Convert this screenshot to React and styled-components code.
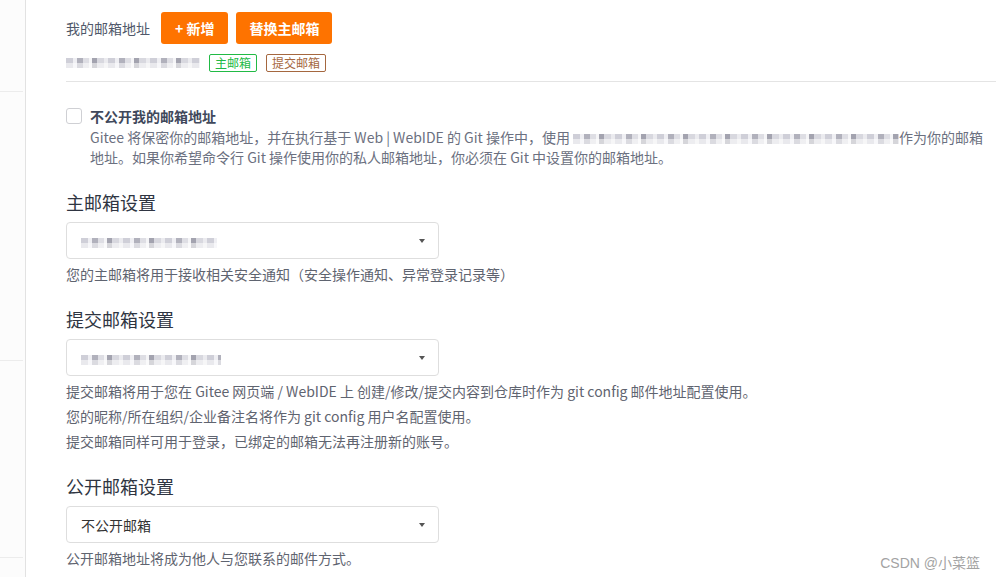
import React from "react";
import styled, { createGlobalStyle } from "styled-components";

const GlobalStyle = createGlobalStyle`
  html, body {
    margin: 0;
    padding: 0;
    background: #fff;
  }
  body {
    font-family: "Noto Sans CJK SC", "Noto Sans", sans-serif;
    color: #40485b;
  }
  * {
    box-sizing: border-box;
  }
`;

const Page = styled.div`
  position: relative;
  display: flex;
  width: 996px;
  height: 577px;
  overflow: hidden;
`;

const Sidebar = styled.aside`
  flex: 0 0 26px;
  background: #fcfcfc;
  border-right: 1px solid #e2e2e2;
`;

const SideItem = styled.div`
  height: ${(p) => p.h}px;
  margin-right: 2px;
  border-bottom: 1px solid #ececec;
`;

const Main = styled.main`
  flex: 1;
  min-width: 0;
  padding: 12px 0 0 40px;
`;

const AddressRow = styled.div`
  display: flex;
  align-items: center;
  gap: 8px;
  height: 32px;
`;

const FieldLabel = styled.span`
  margin-right: 3px;
  font-size: 14px;
  color: #50586a;
`;

const OrangeButton = styled.button`
  height: 32px;
  padding: 0 ${(p) => (p.wide ? 14 : 13)}px;
  border: none;
  border-radius: 3px;
  background: #fe7300;
  color: #fff;
  font-family: inherit;
  font-size: 14px;
  font-weight: 700;
  line-height: 32px;
`;

const EmailRow = styled.div`
  display: flex;
  align-items: center;
  gap: 9px;
  height: 18px;
  margin-top: 10px;
`;

/* pixelated stand-in for the blurred e-mail addresses */
const Masked = styled.span`
  display: inline-block;
  width: ${(p) => p.w}px;
  height: 10px;
  vertical-align: middle;
  background:
    repeating-linear-gradient(
      180deg,
      rgba(255, 255, 255, 0) 0 5px,
      rgba(255, 255, 255, 0.55) 5px 10px
    ),
    repeating-linear-gradient(
      90deg,
      #c4c4cf 0 7px,
      #ececf1 7px 11px,
      #9e9eac 11px 17px,
      #d6d6de 17px 23px,
      #f3f3f6 23px 26px,
      #8d8d9c 26px 31px,
      #cfcfd8 31px 38px,
      #e7e7ec 38px 42px
    );
  filter: blur(0.6px);
  opacity: 0.8;
`;

const Tag = styled.span`
  height: 18px;
  padding: 0 5px;
  border: 1px solid ${(p) => p.color};
  border-radius: 2px;
  color: ${(p) => p.color};
  font-size: 12px;
  line-height: 16px;
`;

const Divider = styled.div`
  height: 1px;
  margin-top: 9px;
  background: #e4e4e4;
`;

const PrivacyBlock = styled.div`
  display: grid;
  grid-template-columns: 16px 1fr;
  column-gap: 8px;
  margin-top: 24px;
`;

const CheckBox = styled.span`
  width: 16px;
  height: 16px;
  margin-top: 2px;
  border: 1px solid #cfd0d4;
  border-radius: 3px;
  background: #fff;
`;

const CheckLabel = styled.span`
  font-size: 14px;
  font-weight: 700;
  line-height: 20px;
  color: #40485b;
`;

const PrivacyText = styled.p`
  grid-column: 2;
  margin: 1px 0 0;
  font-size: 14px;
  line-height: 20px;
  color: #6b7080;
`;

const Section = styled.section`
  margin-top: 22px;
`;

const SectionTitle = styled.h3`
  margin: 0;
  font-size: 18px;
  font-weight: 400;
  line-height: 26px;
  color: #2f3542;
`;

const Select = styled.div`
  display: flex;
  align-items: center;
  justify-content: space-between;
  width: 373px;
  height: 37px;
  margin-top: 7px;
  padding: 0 13px 0 14px;
  border: 1px solid #dedede;
  border-radius: 4px;
  font-size: 14px;
  color: #333;
`;

const Caret = styled.span`
  width: 0;
  height: 0;
  border-left: 3.5px solid transparent;
  border-right: 3.5px solid transparent;
  border-top: 4px solid #555;
`;

const Help = styled.p`
  margin: 5px 0 0;
  font-size: 14px;
  line-height: 20px;
  color: #5f6470;
`;

const Watermark = styled.span`
  position: absolute;
  right: 16px;
  bottom: 5px;
  font-family: "Liberation Sans", "Noto Sans CJK SC", sans-serif;
  font-size: 14px;
  color: #a3a3a3;
`;

const settings = [
  {
    title: "主邮箱设置",
    value: <Masked w={136} />,
    help: ["您的主邮箱将用于接收相关安全通知（安全操作通知、异常登录记录等）"],
  },
  {
    title: "提交邮箱设置",
    value: <Masked w={140} />,
    help: [
      "提交邮箱将用于您在 Gitee 网页端 / WebIDE 上 创建/修改/提交内容到仓库时作为 git config 邮件地址配置使用。",
      "您的昵称/所在组织/企业备注名将作为 git config 用户名配置使用。",
      "提交邮箱同样可用于登录，已绑定的邮箱无法再注册新的账号。",
    ],
  },
  {
    title: "公开邮箱设置",
    value: "不公开邮箱",
    help: ["公开邮箱地址将成为他人与您联系的邮件方式。"],
  },
];

export default function App() {
  return (
    <>
      <GlobalStyle />
      <Page>
        <Sidebar>
          <SideItem h={92} />
          <SideItem h={269} />
          <SideItem h={197} />
        </Sidebar>
        <Main>
          <AddressRow>
            <FieldLabel>我的邮箱地址</FieldLabel>
            <OrangeButton wide>+ 新增</OrangeButton>
            <OrangeButton>替换主邮箱</OrangeButton>
          </AddressRow>
          <EmailRow>
            <Masked w={134} />
            <Tag color="#21ba45">主邮箱</Tag>
            <Tag color="#a5673f">提交邮箱</Tag>
          </EmailRow>
          <Divider />

          <PrivacyBlock>
            <CheckBox />
            <CheckLabel>不公开我的邮箱地址</CheckLabel>
            <PrivacyText>
              Gitee 将保密你的邮箱地址，并在执行基于 Web | WebIDE 的 Git
              操作中，使用 <Masked w={326} />
              作为你的邮箱地址。如果你希望命令行 Git
              操作使用你的私人邮箱地址，你必须在 Git 中设置你的邮箱地址。
            </PrivacyText>
          </PrivacyBlock>

          {settings.map((s) => (
            <Section key={s.title}>
              <SectionTitle>{s.title}</SectionTitle>
              <Select>
                <span>{s.value}</span>
                <Caret />
              </Select>
              {s.help.map((line) => (
                <Help key={line}>{line}</Help>
              ))}
            </Section>
          ))}
        </Main>
        <Watermark>CSDN @小菜篮</Watermark>
      </Page>
    </>
  );
}
